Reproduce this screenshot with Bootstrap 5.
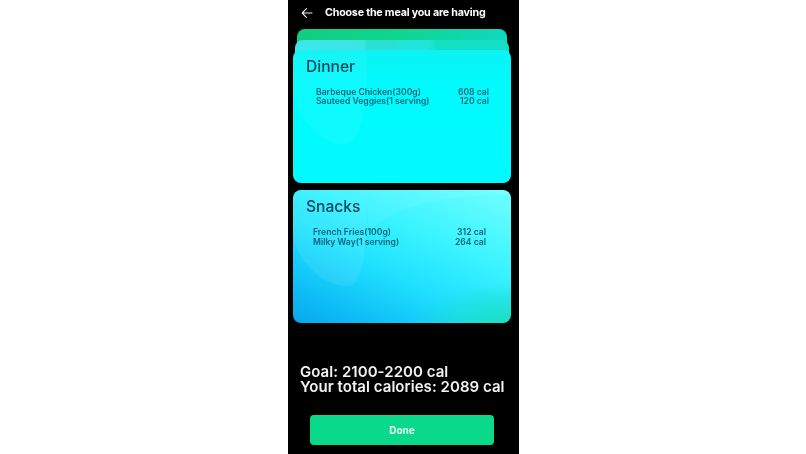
<!DOCTYPE html>
<html lang="en">
<head>
<meta charset="utf-8">
<title>Choose the meal</title>
<link rel="stylesheet" href="https://cdn.jsdelivr.net/npm/bootstrap@5.3.0/dist/css/bootstrap.min.css">
<style>
html, body { height: 100%; margin: 0; background: #fff; overflow: hidden; }
body { font-family: Inter, "Liberation Sans", sans-serif; }
.phone-col { width: 231px; height: 454px; margin-left: 288px; background: #000; filter: blur(.4px); }
.top-bar { height: 29px; padding-left: 13px; gap: 12px; color: #fff; }
.top-title { font-size: 10.7px; font-weight: 700; letter-spacing: -.2px; line-height: 1; margin-top: -2px; }
.top-bar svg { margin-top: -3px; }
.stack-area { padding: 0 8px 0 5px; }
.stack-back { height: 30px; margin: 0 4px -19px 4px; border-radius: 8px; background: linear-gradient(90deg, #10cf7e, #10d590 50%, #0fd8c0); }
.stack-mid { height: 30px; margin: 0 2px -20px 2px; border-radius: 8px 8px 0 0; background: linear-gradient(90deg, #3ce6ea 0, #3ce4e4 32%, #2ae0d2 34%, #2ae0d2 47%, #24e4da 49%, #24e4da 62%, #14dfc4 66%); position: relative; }
.meal-tile { position: relative; height: 133px; border-radius: 8px; overflow: hidden; color: #064a5c; background: #00faff; padding: 7px 13px; }
.tile-dinner { background: linear-gradient(180deg, #0cf3f5 0, #00fbff 30%, #00faff 100%); }
.tile-snacks { margin-top: 7px; background: radial-gradient(ellipse 45% 30% at 100% 100%, #1adfc0 0, rgba(26,223,192,0) 100%), linear-gradient(205deg, #70ffff 0, #3af4ff 35%, #1fe0ff 60%, #0cb8f4 88%, #09a8ec 100%); }
.tile-shape { position: absolute; inset: 0; width: 100%; height: 100%; }
.tile-body { position: relative; }
.tile-name { font-size: 15.6px; font-weight: 500; line-height: 20px; margin: 0 0 10px; color: #0a4558; }
.food-row { font-size: 8.6px; font-weight: 600; line-height: 9.5px; color: #0a6478; }
.dinner-rows { padding: .5px 9px 0 10px; }
.snack-rows { padding: 1px 12px 0 7px; }
.summary-text { font-family: Inter, sans-serif; font-size: 15px; letter-spacing: .05px; font-weight: 600; line-height: 15px; color: #f2f2f2; margin: 41px 0 0 12px; white-space: nowrap; }
.done-btn { display: block; width: 184px; height: 30px; margin: 21px 0 0 22px; padding: 0; border: 0; border-radius: 4px; background: #0ad98a; color: #e8fff5; font-size: 10px; font-weight: 700; }
.done-btn:hover { background: #0ad98a; color: #e8fff5; }
</style>
</head>
<body>
<main class="phone-col d-flex flex-column">
  <div class="top-bar d-flex align-items-center">
    <svg width="12" height="12" viewBox="0 0 12 12" fill="none" stroke="#f2f2f2" stroke-width="1.1" stroke-linecap="round" stroke-linejoin="round"><path d="M11 6H1.2M5.4 1.6 1.2 6l4.2 4.4"/></svg>
    <span class="top-title">Choose the meal you are having</span>
  </div>
  <div class="stack-area">
    <div class="stack-back"></div>
    <div class="stack-mid"></div>
    <section class="meal-tile tile-dinner">
      <svg class="tile-shape" viewBox="0 0 218 133" preserveAspectRatio="none"><path d="M0 0H73C76 40 72 94 50 94 25 94 5 65 0 45Z" fill="#fff" opacity=".05"/></svg>
      <div class="tile-body">
        <h2 class="tile-name">Dinner</h2>
        <div class="dinner-rows">
          <div class="food-row d-flex justify-content-between"><span>Barbeque Chicken(300g)</span><span>608 cal</span></div>
          <div class="food-row d-flex justify-content-between"><span>Sauteed Veggies(1 serving)</span><span>120 cal</span></div>
        </div>
      </div>
    </section>
    <section class="meal-tile tile-snacks">
      <svg class="tile-shape" viewBox="0 0 218 133" preserveAspectRatio="none"><path d="M0 0H73C76 40 72 96 55 96 28 96 5 70 0 48Z" fill="#fff" opacity=".08"/><path d="M76 48C86 22 130 6 218 4V0H73Z" fill="#fff" opacity=".07"/></svg>
      <div class="tile-body">
        <h2 class="tile-name">Snacks</h2>
        <div class="snack-rows">
          <div class="food-row d-flex justify-content-between"><span>French Fries(100g)</span><span>312 cal</span></div>
          <div class="food-row d-flex justify-content-between"><span>Milky Way(1 serving)</span><span>264 cal</span></div>
        </div>
      </div>
    </section>
  </div>
  <div class="summary-text"><div>Goal: 2100-2200 cal</div><div>Your total calories: 2089 cal</div></div>
  <button type="button" class="btn done-btn">Done</button>
</main>
<script src="https://cdn.jsdelivr.net/npm/bootstrap@5.3.0/dist/js/bootstrap.bundle.min.js"></script>
</body>
</html>
